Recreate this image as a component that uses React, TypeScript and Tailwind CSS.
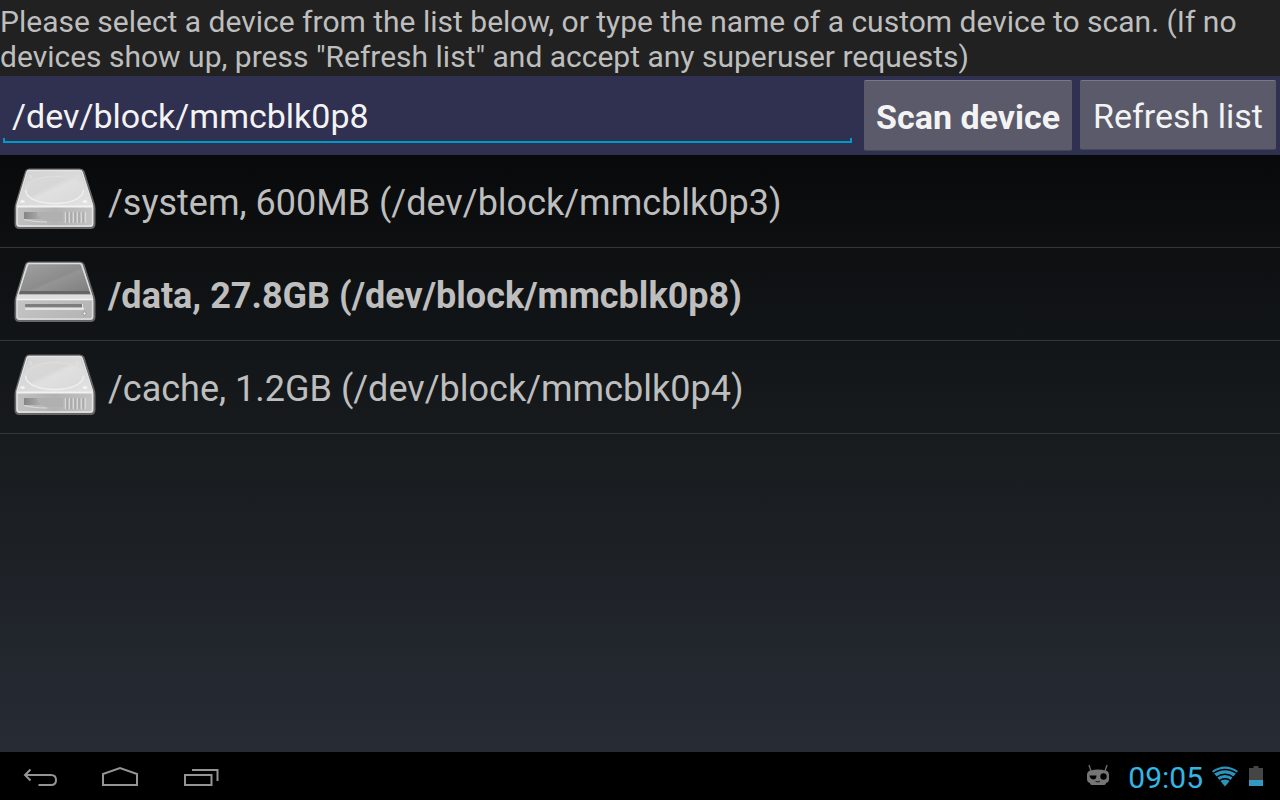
import { useState } from "react";

function HardDiskIcon() {
  return (
    <svg viewBox="0 0 84 64" className="h-16 w-[84px] shrink-0" aria-hidden="true">
      <defs>
        <linearGradient id="hdTop" x1="0" y1="0" x2="1" y2="1">
          <stop offset="0" stopColor="#d2d2d2" />
          <stop offset="1" stopColor="#e2e2e2" />
        </linearGradient>
        <linearGradient id="hdPlate" x1="0" y1="0" x2="1" y2="1">
          <stop offset="0" stopColor="#dadada" />
          <stop offset="0.4" stopColor="#d6d6d6" />
          <stop offset="0.5" stopColor="#e0e0e0" />
          <stop offset="1" stopColor="#d8d8d8" />
        </linearGradient>
        <linearGradient id="hdFront" x1="0" y1="0" x2="1" y2="0">
          <stop offset="0" stopColor="#c2c2c2" />
          <stop offset="0.5" stopColor="#b2b2b2" />
          <stop offset="1" stopColor="#c4c4c4" />
        </linearGradient>
        <linearGradient id="hdSlot" x1="0" y1="0" x2="1" y2="0">
          <stop offset="0" stopColor="#858585" />
          <stop offset="1" stopColor="#b8b8b8" />
        </linearGradient>
      </defs>
      <path d="M16 2.500H67Q69.500 2.500 70.500 4.500L80.500 36Q81.500 39 81.500 42V57Q81.500 61 77.500 61H6.500Q2.500 61 2.500 57V42Q2.500 39 3.500 36L13 4.500Q14 2.500 16 2.500Z" fill="url(#hdFront)" stroke="#666" strokeWidth="2" />
      <path d="M16 3H67L79.500 39H4Z" fill="url(#hdTop)" />
      <ellipse cx="41.500" cy="22.500" rx="29" ry="14" fill="url(#hdPlate)" />
      <path d="M12.500 23C13 41 70 41 70.500 23" fill="none" stroke="#efefef" strokeWidth="1.500" />
      <path d="M12.500 23C14 5 69 5 70.500 23" fill="none" stroke="#dfdfdf" strokeWidth="1" />
      <ellipse cx="9.500" cy="34.500" rx="2.400" ry="1.600" fill="#f3f3f3" />
      <ellipse cx="72" cy="34.500" rx="2.400" ry="1.600" fill="#f3f3f3" />
      <path d="M17 8L19 12M65 8L63 12" stroke="#e4e4e4" />
      <path d="M16 3.500H66.500Q68.500 3.500 69 5L79.500 38V56.500Q79.500 59 77 59H6.500Q4 59 4 56.500V38L14 5Q14.500 3.500 16 3.500Z" fill="none" stroke="#e4e4e4" strokeWidth="1.400" />
      <path d="M4 39.500H79.500" stroke="#f2f2f2" strokeWidth="2" />
      <path d="M11 45V52H32Q24 50 24 45Z" fill="url(#hdSlot)" />
      <path d="M24 45H50V54H34Q24 51 24 45Z" fill="#b0b0b0" />
      <path d="M11 52.500Q20 55 34 55" fill="none" stroke="#dcdcdc" />
      <path d="M52.500 45V56M56.500 45V56M60.500 45V56M64.500 45V56M68.500 45V56M72.500 45V56" stroke="#d8d8d8" strokeWidth="1.400" />
      <path d="M54 45V56M58 45V56M62 45V56M66 45V56M70 45V56" stroke="#a2a2a2" strokeWidth="1.200" />
    </svg>
  );
}

function RemovableDriveIcon() {
  return (
    <svg viewBox="0 0 84 64" className="h-16 w-[84px] shrink-0" aria-hidden="true">
      <defs>
        <linearGradient id="rdTop" x1="0" y1="0" x2="1" y2="1">
          <stop offset="0" stopColor="#a2a2a2" />
          <stop offset="0.5" stopColor="#8c8c8c" />
          <stop offset="0.55" stopColor="#949494" />
          <stop offset="1" stopColor="#7c7c7c" />
        </linearGradient>
        <linearGradient id="rdFront" x1="0" y1="0" x2="1" y2="1">
          <stop offset="0" stopColor="#cecece" />
          <stop offset="1" stopColor="#b2b2b2" />
        </linearGradient>
      </defs>
      <path d="M16 2.500H67Q69.500 2.500 70.500 4.500L80.500 36Q81.500 39 81.500 42V57Q81.500 61 77.500 61H6.500Q2.500 61 2.500 57V42Q2.500 39 3.500 36L13 4.500Q14 2.500 16 2.500Z" fill="url(#rdFront)" stroke="#666" strokeWidth="2" />
      <path d="M16 3H67L78 34H5.500Z" fill="url(#rdTop)" />
      <path d="M6.500 31H77L78 34.500H5.500Z" fill="#666" />
      <path d="M5.500 34.500H78L79.500 39H4Z" fill="#dedede" />
      <path d="M16 3.500H66.500Q68.500 3.500 69 5L79.500 38V56.500Q79.500 59 77 59H6.500Q4 59 4 56.500V38L14 5Q14.500 3.500 16 3.500Z" fill="none" stroke="#dedede" strokeWidth="1.400" />
      <path d="M4 39.500H79.500" stroke="#f2f2f2" strokeWidth="1.600" />
      <rect x="12" y="44" width="59" height="3" rx="1" fill="#7d7d7d" />
      <rect x="12" y="48" width="59" height="2" rx="1" fill="#e4e4e4" />
      <rect x="69" y="44" width="1.500" height="5" fill="#e4e4e4" />
      <circle cx="71.500" cy="53.500" r="2" fill="#8d8d8d" />
      <circle cx="71.500" cy="53.500" r="1.200" fill="#f4f4f4" />
    </svg>
  );
}

const devices = [
  { mount: "/system", size: "600MB", path: "/dev/block/mmcblk0p3", removable: false },
  { mount: "/data", size: "27.8GB", path: "/dev/block/mmcblk0p8", removable: true },
  { mount: "/cache", size: "1.2GB", path: "/dev/block/mmcblk0p4", removable: false },
];

export default function App() {
  const [device, setDevice] = useState("/dev/block/mmcblk0p8");

  return (
    <div className="flex min-h-screen flex-col bg-black font-['Roboto',sans-serif] text-[#bebebe]">
      <main className="flex flex-1 flex-col bg-[linear-gradient(to_bottom,#000000,#181c1f_60%,#272b34)]">
        <p className="bg-[#212121] pt-1 pb-0.5 text-[30px] leading-[35px]">
          Please select a device from the list below, or type the name of a custom device to scan. (If no devices
          show up, press "Refresh list" and accept any superuser requests)
        </p>
        <form className="flex items-start gap-2 bg-[#303050] p-1" onSubmit={(e) => e.preventDefault()}>
          <div className="relative -ml-px mr-1 flex flex-1">
            <input
              aria-label="Device name"
              value={device}
              onChange={(e) => setDevice(e.target.value)}
              className="h-[63px] w-full min-w-0 border-b-2 border-[#0099cc] bg-transparent px-[9px] pt-2.5 text-[34px] leading-10 text-[#f3f3f3] outline-none"
            />
            <span className="absolute bottom-0 left-0 h-[5px] w-0.5 bg-[#0099cc]" />
            <span className="absolute right-0 bottom-0 h-[5px] w-0.5 bg-[#0099cc]" />
          </div>
          <button className="h-[71px] rounded-xs border-t border-b border-t-[#777787] border-b-[#464655] bg-[#5a5a6b] px-3 pt-0.5 text-[34px] leading-10 font-bold text-[#f3f3f3]">
            Scan device
          </button>
          <button className="h-[70px] rounded-xs border-t border-b border-t-[#777787] border-b-[#464655] bg-[#5a5a6b] px-[13px] pt-0.5 text-[34px] leading-10 text-[#f3f3f3]">
            Refresh list
          </button>
        </form>
        <ul>
          {devices.map((d) => (
            <li key={d.path} className="border-b border-[#34363a]">
              <button
                type="button"
                onClick={() => setDevice(d.path)}
                className={`flex h-[92px] w-full items-center gap-[11px] px-[13px] pb-1 text-left text-[36px] ${d.path === "/dev/block/mmcblk0p8" ? "font-bold" : ""}`}
              >
                {d.removable ? <RemovableDriveIcon /> : <HardDiskIcon />}
                <span className="pt-2">
                  {d.mount}, {d.size} ({d.path})
                </span>
              </button>
            </li>
          ))}
        </ul>
      </main>

      <footer className="flex h-12 items-center justify-between bg-black">
        <nav className="flex text-[#949494]">
          <button aria-label="Back" className="flex h-12 w-20 items-center justify-center">
            <svg viewBox="0 0 80 48" className="h-12 w-20" fill="none" stroke="currentColor" strokeWidth="2">
              <path d="M30.500 17.500L25 23L30.500 28.500M25 23H51C54 23 56 25 56 28S54 33 51 33H38.500" />
            </svg>
          </button>
          <button aria-label="Home" className="flex h-12 w-20 items-center justify-center">
            <svg viewBox="0 0 80 48" className="h-12 w-20" fill="none" stroke="currentColor" strokeWidth="2">
              <path d="M23 33V22L40 16L57 22V33Z" />
            </svg>
          </button>
          <button aria-label="Recent apps" className="flex h-12 w-20 items-center justify-center">
            <svg viewBox="0 0 80 48" className="h-12 w-20" fill="none" stroke="currentColor" strokeWidth="2">
              <path d="M25 23H51.500V33H25ZM32 18H57.500V29" />
            </svg>
          </button>
        </nav>
        <div className="flex items-center pr-[17px]">
          <svg viewBox="0 0 24 24" className="mr-[18px] h-6 w-6" aria-label="CyanogenMod">
            <path d="M3 1L5 7M21 1L19 7" stroke="#6e6e6e" strokeWidth="1.300" />
            <path d="M4.500 6.500Q12 4.500 19.500 6.500Q23 7 23 11V15Q23 18.500 20 19Q20 21 17 21H7Q4 21 4 19Q1 18.500 1 15V11Q1 7 4.500 6.500Z" fill="#757575" />
            <path d="M3.500 11.500H10.500Q10.500 15.500 7.300 15.500Q4 15 3.500 11.500Z" fill="#000" />
            <circle cx="17.500" cy="12.500" r="3.200" fill="#000" />
            <path d="M9.500 17.200Q12 19 14 17" stroke="#111" fill="none" />
          </svg>
          <time className="mr-2 pt-1 text-[30px] leading-9 text-[#33b5e5]">09:05</time>
          <svg viewBox="0 0 28 22" className="mr-[10px] h-[22px] w-7" aria-label="Wi-Fi" fill="none">
            <path d="M1 6Q14 -3 27 6L14 21.500Z" fill="#2b94bd" />
            <path d="M2 8.500Q14 0.500 26 8.500M5 12.500Q14 6 23 12.500M8 16Q14 11.500 20 16" stroke="#000" strokeWidth="1.300" />
          </svg>
          <svg viewBox="0 0 14 22" className="h-[22px] w-3.5" aria-label="Battery">
            <path d="M0 3H4.500V1H9.500V3H14V21H0Z" fill="#454545" />
            <path d="M0 15H14V21H0Z" fill="#3399c2" />
          </svg>
        </div>
      </footer>
    </div>
  );
}
